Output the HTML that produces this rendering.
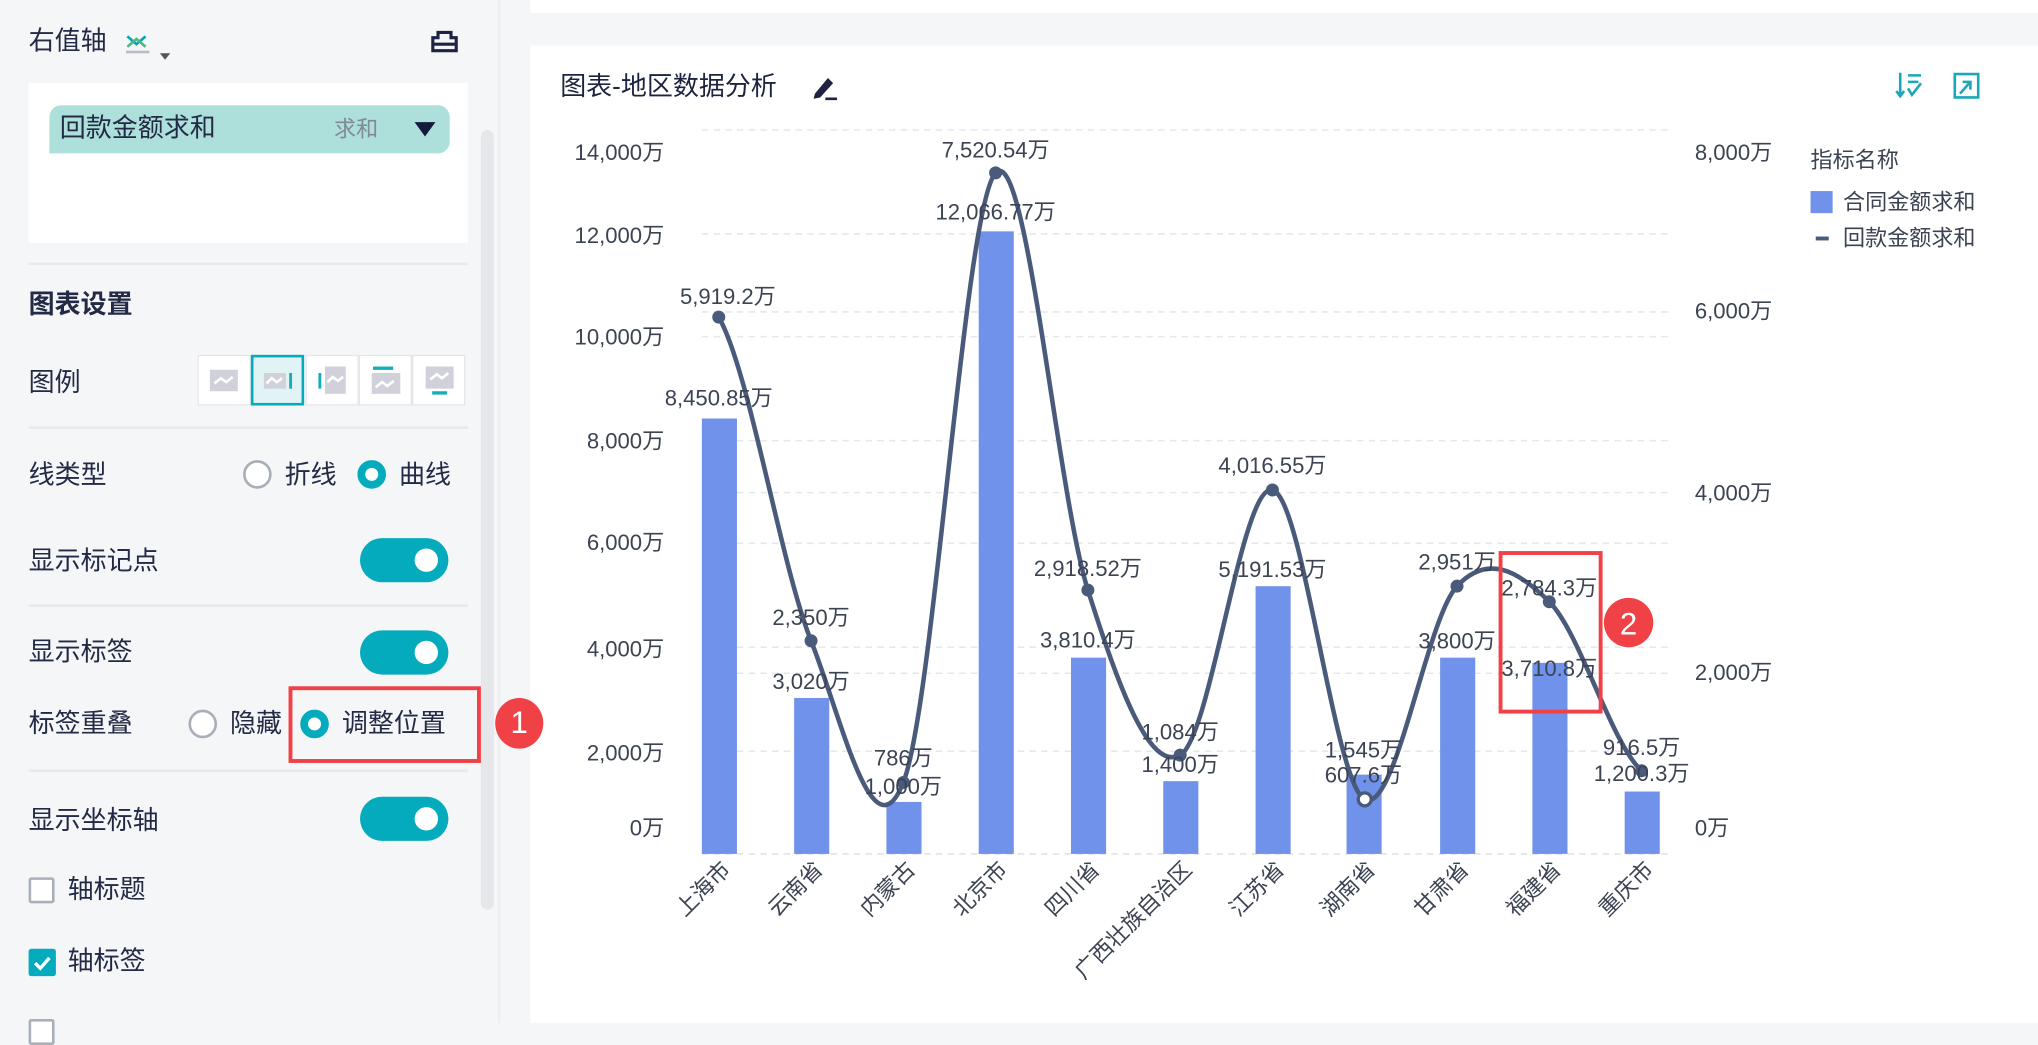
<!DOCTYPE html>
<html><head><meta charset="utf-8"><style>
*{margin:0;padding:0;box-sizing:border-box}
html,body{width:2038px;height:1023px;overflow:hidden;background:#f5f6f8}
#w{position:absolute;left:0;top:0;width:1568px;height:787px;transform:scale(1.29974);transform-origin:0 0;font-family:"Liberation Sans","Noto Sans CJK SC",sans-serif;color:#232a45}
.a{position:absolute;white-space:nowrap}
.t{font-size:20px;line-height:24px}
.div{position:absolute;left:22px;width:338px;height:2px;background:#e8e9ec}
.tg{position:absolute;left:277px;width:68px;height:34px;border-radius:17px;background:#03abbd}
.tg:after{content:"";position:absolute;right:8px;top:8px;width:18px;height:18px;border-radius:50%;background:#fff}
.ro{position:absolute;width:22px;height:22px;border-radius:50%;border:2px solid #a8adb8;background:#fff}
.rs{position:absolute;width:22px;height:22px;border-radius:50%;border:6px solid #03abbd;background:#fff}
.lg{position:absolute;top:273px;width:41px;height:39px;border:1px solid #e4e6ea;background:#fff}
</style></head><body><div id="w">
<div class="a" style="left:383px;top:0;width:2px;height:787px;background:#eceef1"></div>
<div class="a" style="left:370px;top:100px;width:10px;height:600px;border-radius:5px;background:#e6e7eb"></div>
<div class="a t" style="left:22px;top:20px">右值轴</div>
<svg class="a" style="left:96px;top:24px" width="40" height="26" viewBox="0 0 40 26"><path d="M2 4 L9 10 L16 4" stroke="#00a6b6" stroke-width="2" fill="none"/><path d="M2 12 L9 6 L16 12" stroke="#4fb87f" stroke-width="2" fill="none"/><rect x="1" y="15" width="18" height="2" fill="#b8bccb"/><path d="M27 17 L35 17 L31 22Z" fill="#555"/></svg>
<svg class="a" style="left:331px;top:21px" width="22" height="22" viewBox="0 0 22 22"><path d="M6 4 H16 V8 H20 V18 H2 V8 H6Z M2 13 H20" stroke="#1d2340" stroke-width="2.4" fill="none"/></svg>
<div class="a" style="left:22px;top:64px;width:338px;height:123px;background:#fff"></div>
<div class="a" style="left:38px;top:81px;width:308px;height:37px;background:#ade0db;border-radius:9px 9px 9px 0"></div>
<div class="a t" style="left:46px;top:87px">回款金额求和</div>
<div class="a" style="left:257px;top:89px;font-size:17px;line-height:22px;color:#7f8a95">求和</div>
<svg class="a" style="left:318px;top:92px" width="18" height="14"><path d="M1 2 H17 L9 13Z" fill="#141a3a"/></svg>
<div class="div" style="top:202px"></div>
<div class="a t" style="left:22px;top:223px;font-weight:bold">图表设置</div>
<div class="a t" style="left:22px;top:283px">图例</div>
<div class="lg" style="left:152px"></div><div class="lg" style="left:193px;border:2px solid #03abbd;background:#e1f3f5"></div><div class="lg" style="left:235px"></div><div class="lg" style="left:276px"></div><div class="lg" style="left:317px"></div>
<svg class="a" style="left:0;top:0" width="383" height="330"><g fill="#d0d1da"><rect x="161.5" y="284.5" width="21.5" height="16.5"/><rect x="203" y="287" width="17" height="12"/><rect x="250" y="282" width="16" height="21"/><rect x="286" y="287" width="22" height="16"/><rect x="327.5" y="282" width="21.5" height="17"/></g><g stroke="#fff" stroke-width="2" fill="none"><path d="M165 295 l5 -4 l4 3 l5 -4"/><path d="M205 295 l4 -4 l4 3 l4 -3"/><path d="M252 294 l4 -4 l4 3 l4 -3"/><path d="M289 298 l5 -4 l4 3 l5 -4"/><path d="M331 292 l5 -4 l4 3 l5 -4"/></g><g fill="#14adbd"><rect x="222.5" y="287" width="2.2" height="12"/><rect x="245" y="287" width="2.2" height="12"/><rect x="287" y="282" width="15.5" height="2.6"/><rect x="332.5" y="301" width="11.5" height="2.6"/></g></svg>
<div class="div" style="top:328px"></div>
<div class="a t" style="left:22px;top:354px">线类型</div>
<div class="ro" style="left:187px;top:354px"></div><div class="a t" style="left:219px;top:354px">折线</div>
<div class="rs" style="left:275px;top:354px"></div><div class="a t" style="left:307px;top:354px">曲线</div>
<div class="a t" style="left:22px;top:420px">显示标记点</div><div class="tg" style="top:414px"></div>
<div class="div" style="top:465px"></div>
<div class="a t" style="left:22px;top:490px">显示标签</div><div class="tg" style="top:485px"></div>
<div class="a t" style="left:22px;top:545px">标签重叠</div>
<div class="ro" style="left:145px;top:546px"></div><div class="a t" style="left:177px;top:545px">隐藏</div>
<div class="rs" style="left:231px;top:546px"></div><div class="a t" style="left:263px;top:545px">调整位置</div>
<div class="a" style="left:222px;top:528px;width:148px;height:59px;border:3px solid #f04246"></div>
<div class="div" style="top:592px"></div>
<div class="a t" style="left:22px;top:620px">显示坐标轴</div><div class="tg" style="top:613px"></div>
<div class="a" style="left:22px;top:675px;width:20px;height:20px;border:2px solid #aab0ba;border-radius:2px;background:#fff"></div><div class="a t" style="left:52px;top:673px">轴标题</div>
<div class="a" style="left:22px;top:730px;width:21px;height:21px;border-radius:2px;background:#03abbd"></div>
<svg class="a" style="left:22px;top:730px" width="21" height="21"><path d="M5 11 l4 4 l7 -8" stroke="#fff" stroke-width="2.6" fill="none"/></svg>
<div class="a t" style="left:52px;top:728px">轴标签</div>
<div class="a" style="left:22px;top:784px;width:20px;height:20px;border:2px solid #aab0ba;border-radius:2px;background:#fff"></div>
<div class="a" style="left:408px;top:0;width:1160px;height:10px;background:#fff"></div>
<div class="a" style="left:408px;top:35px;width:1160px;height:752px;background:#fff"></div>
<div class="a" style="left:381px;top:537px;width:37px;height:39px;border-radius:50%;background:#f04246;color:#fff;font-size:24px;text-align:center;line-height:39px">1</div>
<div class="a t" style="left:431px;top:55px;color:#1d2340">图表-地区数据分析</div>
<svg class="a" style="left:622px;top:56px" width="24" height="22"><path d="M5 16 L15 4 L19 8 L9 19 L4 20Z" fill="#1d2340"/><path d="M13 20 H22" stroke="#1d2340" stroke-width="2"/></svg>
<svg class="a" style="left:1458px;top:54px" width="80" height="24"><g stroke="#1aa8b8" stroke-width="2" fill="none"><path d="M4 2 V20 M1 16 L4 20 L7 16 M10 4 H20 M10 9 H18 M10 14 L13 19 L20 10"/><path d="M46 3 H64 V21 H46Z M52 9 H58 V15 M50 18 L58 9"/></g></svg>
<svg class="a" style="left:0;top:0" width="1568" height="787" font-family="Liberation Sans, Noto Sans CJK SC, sans-serif">
<g stroke="#e6e7ea" stroke-dasharray="5 4" stroke-width="1.2">
<line x1="540" x2="1285" y1="100" y2="100"/><line x1="540" x2="1285" y1="180" y2="180"/><line x1="540" x2="1285" y1="240" y2="240"/><line x1="540" x2="1285" y1="259" y2="259"/><line x1="540" x2="1285" y1="339" y2="339"/><line x1="540" x2="1285" y1="379" y2="379"/><line x1="540" x2="1285" y1="418" y2="418"/><line x1="540" x2="1285" y1="498" y2="498"/><line x1="540" x2="1285" y1="518" y2="518"/><line x1="540" x2="1285" y1="578" y2="578"/></g>
<line x1="540" x2="1285" y1="657" y2="657" stroke="#dcdde2" stroke-dasharray="5 4"/>
<g font-size="17" fill="#3c4353" text-anchor="end">
<text x="511" y="123">14,000万</text><text x="511" y="187">12,000万</text><text x="511" y="265">10,000万</text><text x="511" y="345">8,000万</text><text x="511" y="423">6,000万</text><text x="511" y="505">4,000万</text><text x="511" y="585">2,000万</text><text x="511" y="643">0万</text></g>
<g font-size="17" fill="#3c4353">
<text x="1304" y="123">8,000万</text><text x="1304" y="245">6,000万</text><text x="1304" y="385">4,000万</text><text x="1304" y="523">2,000万</text><text x="1304" y="643">0万</text></g>
<g fill="#7192ea">
<rect x="540" y="322" width="27" height="335"/><rect x="611" y="537" width="27" height="120"/><rect x="682" y="617" width="27" height="40"/><rect x="753" y="178" width="27" height="479"/><rect x="824" y="506" width="27" height="151"/><rect x="895" y="601" width="27" height="56"/><rect x="966" y="451" width="27" height="206"/><rect x="1036" y="596" width="27" height="61"/><rect x="1108" y="506" width="27" height="151"/><rect x="1179" y="510" width="27" height="147"/><rect x="1250" y="609" width="27" height="48"/></g>
<path d="M553 244 C576.7 285.5 600.3 433.3 624 493 C647.7 552.7 671.3 662 695 602 C718.7 542 742.3 157.7 766 133 C789.7 108.3 813.3 379.3 837 454 C860.7 528.7 884.3 593.8 908 581 C931.7 568.2 955.3 371.3 979 377 C1002.7 382.7 1026.3 602.7 1050 615 C1073.7 627.3 1097.3 476.3 1121 451 C1144.7 425.7 1168.3 439.3 1192 463 C1215.7 486.7 1239.3 571.3 1263 593" stroke="#4a5a7b" stroke-width="3.5" fill="none"/>
<g fill="#4a5a7b"><circle cx="553" cy="244" r="5"/><circle cx="624" cy="493" r="5"/><circle cx="695" cy="602" r="5"/><circle cx="766" cy="133" r="5"/><circle cx="837" cy="454" r="5"/><circle cx="908" cy="581" r="5"/><circle cx="979" cy="377" r="5"/><circle cx="1121" cy="451" r="5"/><circle cx="1192" cy="463" r="5"/><circle cx="1263" cy="593" r="5"/></g>
<circle cx="1050" cy="615" r="5" fill="#fff" stroke="#4a5a7b" stroke-width="2.5"/>
<g font-size="17" fill="#3c4353" text-anchor="middle">
<text x="560" y="234">5,919.2万</text><text x="553" y="312">8,450.85万</text><text x="766" y="121">7,520.54万</text><text x="766" y="169">12,066.77万</text><text x="624" y="481">2,350万</text><text x="624" y="530">3,020万</text><text x="695" y="589">786万</text><text x="695" y="611">1,000万</text><text x="837" y="443">2,918.52万</text><text x="837" y="498">3,810.4万</text><text x="908" y="569">1,084万</text><text x="908" y="594">1,400万</text><text x="979" y="364">4,016.55万</text><text x="979" y="444">5,191.53万</text><text x="1049" y="583">1,545万</text><text x="1049" y="602">607.6万</text><text x="1121" y="438">2,951万</text><text x="1121" y="499">3,800万</text><text x="1192" y="458">2,784.3万</text><text x="1192" y="520">3,710.8万</text><text x="1263" y="581">916.5万</text><text x="1263" y="601">1,200.3万</text></g>
<g font-size="17" fill="#3c4353" text-anchor="end">
<text transform="translate(563 670) rotate(-45)">上海市</text><text transform="translate(634 670) rotate(-45)">云南省</text><text transform="translate(705 670) rotate(-45)">内蒙古</text><text transform="translate(776 670) rotate(-45)">北京市</text><text transform="translate(847 670) rotate(-45)">四川省</text><text transform="translate(918 670) rotate(-45)">广西壮族自治区</text><text transform="translate(989 670) rotate(-45)">江苏省</text><text transform="translate(1059 670) rotate(-45)">湖南省</text><text transform="translate(1131 670) rotate(-45)">甘肃省</text><text transform="translate(1202 670) rotate(-45)">福建省</text><text transform="translate(1273 670) rotate(-45)">重庆市</text></g>
<g font-size="17" fill="#3c4353"><text x="1393" y="129">指标名称</text><text x="1418" y="161">合同金额求和</text><text x="1418" y="189">回款金额求和</text></g>
<rect x="1393" y="147" width="17" height="17" fill="#7192ea"/><rect x="1397" y="182" width="10" height="3" fill="#4a5a7b"/>
<rect x="1154.5" y="425.5" width="77" height="122" fill="none" stroke="#f04246" stroke-width="3"/>
<circle cx="1253" cy="479" r="19" fill="#f04246"/><text x="1253" y="488" font-size="24" fill="#fff" text-anchor="middle">2</text>
</svg>
</div></body></html>
